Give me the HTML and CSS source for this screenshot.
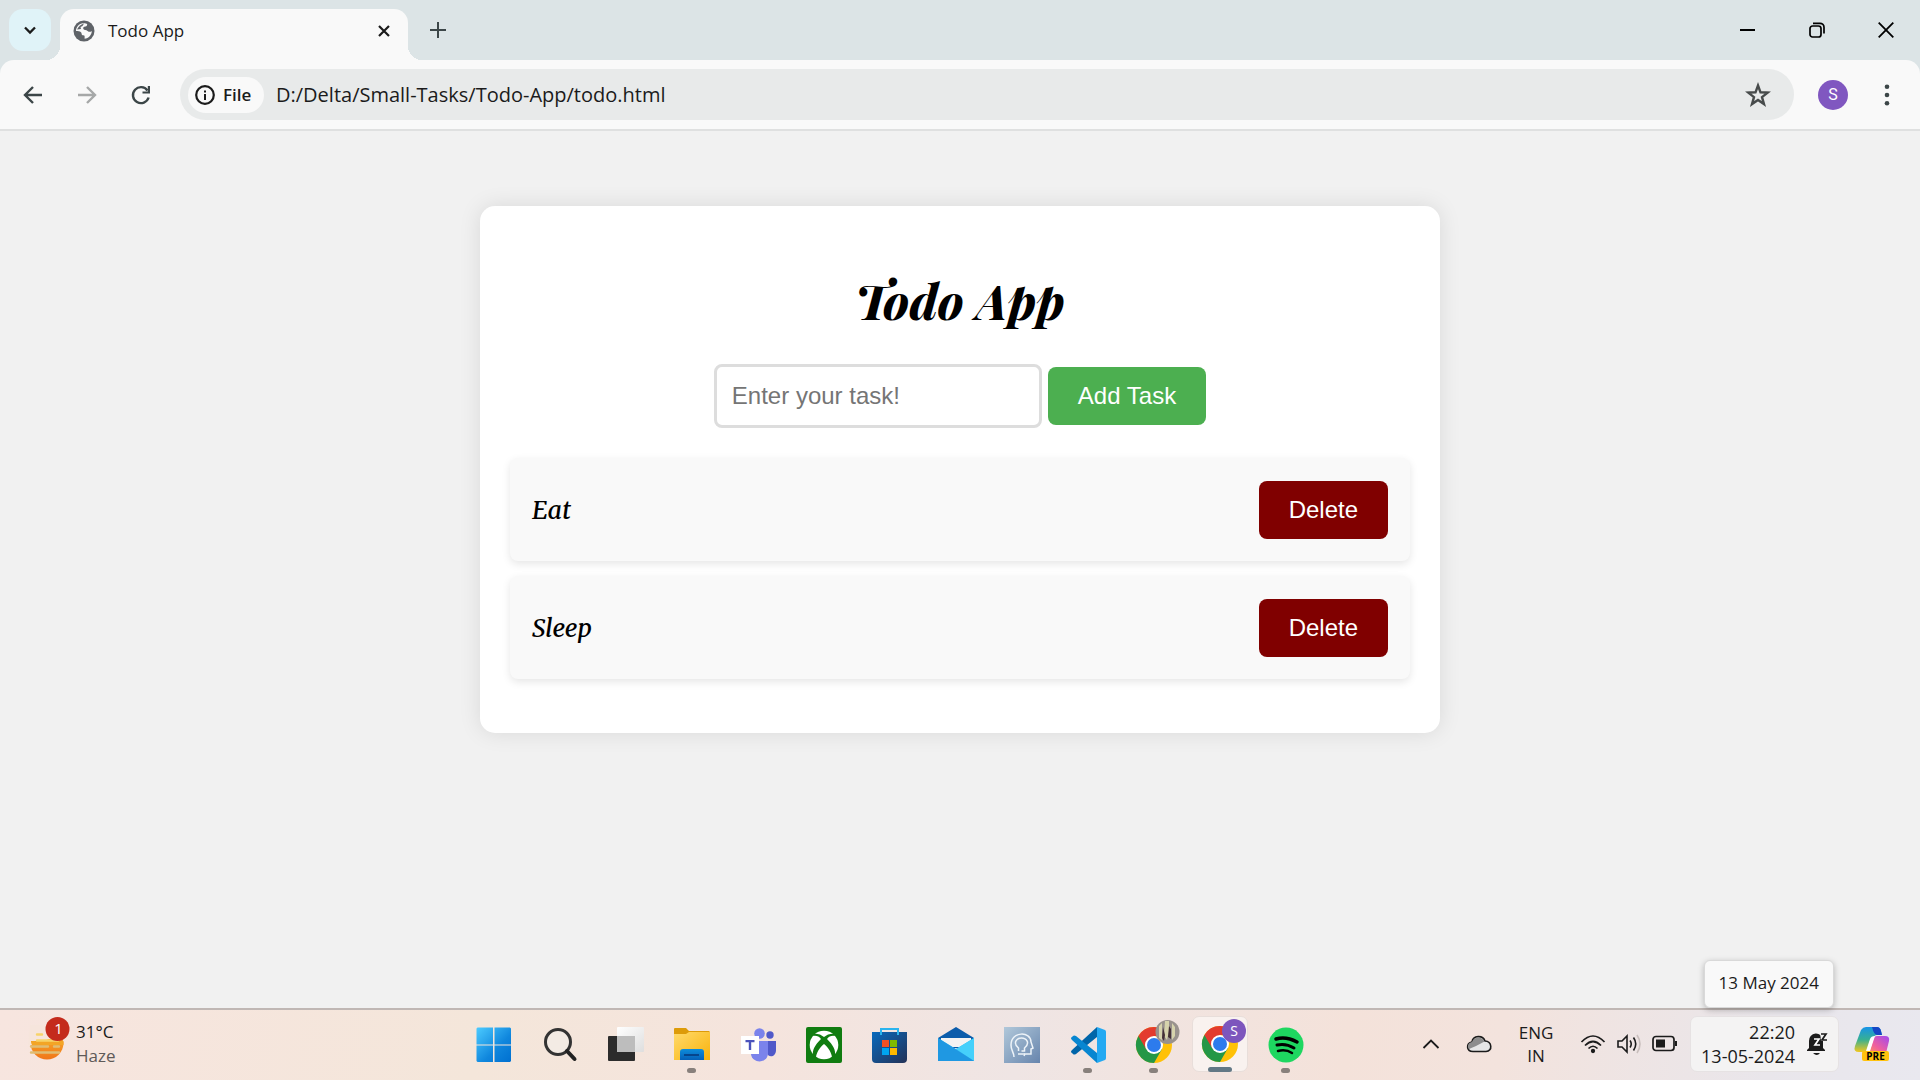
FILE: index.html
```html
<!DOCTYPE html>
<html lang="en">
<head>
<meta charset="utf-8">
<title>Todo App</title>
<link rel="stylesheet" href="styles.css">
</head>
<body>
<header class="browser">
  <div class="tab-strip">
    <button class="tab-search" aria-label="Search tabs"><svg width="14" height="14" viewBox="0 0 14 14"><path d="M2 4.500l5 5 5-5" fill="none" stroke="#1b1b1b" stroke-width="2.300"/></svg></button>
    <div class="tab">
      <svg width="22" height="22" viewBox="0 0 22 22"><circle cx="11" cy="11" r="10.500" fill="#5f6368"/><path d="M10 3.200c-4 .4-7 3.800-7 7.800 2 0 3.800 0 5 1.200 1 1 .2 2.500 1.600 3 1.300.4 2-.2 2 1v2.500c4-.4 7.200-3.700 7.200-7.700-1.600 1.300-3 .9-4.200-.1-1.300-1-3.500-.6-4.200-1.900-.7-1.500.3-2.500 2-2.500 1.500 0 1.600-1.200 1.800-2.400C13 3 11 3.100 10 3.200z" fill="#f9f9f9"/><path d="M4 9.500c1.500-3 3.500-5 7-6L9.500 6l-2 1 .5 2z" fill="#5f6368"/></svg>
      <span class="tab-title">Todo App</span>
      <button class="tab-close" aria-label="Close tab"><svg width="12" height="12" viewBox="0 0 12 12"><path d="M1 1l10 10M11 1L1 11" stroke="#1b1b1b" stroke-width="2.200"/></svg></button>
    </div>
    <button class="new-tab" aria-label="New tab"><svg width="16" height="16" viewBox="0 0 16 16"><path d="M8 0v16M0 8h16" stroke="#3c4648" stroke-width="2"/></svg></button>
    <div class="window-controls">
      <button aria-label="Minimize"><svg width="16" height="16" viewBox="0 0 16 16"><path d="M0 7h15v2H0z"/></svg></button>
      <button aria-label="Restore"><svg width="16" height="16" viewBox="0 0 16 16" fill="none" stroke="#000" stroke-width="1.700"><rect x="1" y="4" width="11" height="11" rx="2.500"/><path d="M4 1.300h7a4 4 0 0 1 4 4v6.200" /></svg></button>
      <button aria-label="Close"><svg width="16" height="16" viewBox="0 0 16 16"><path d="M.7.700l14.600 14.600M15.300.700L.7 15.300" stroke="#000" stroke-width="1.800"/></svg></button>
    </div>
  </div>
  <div class="toolbar">
    <button class="nav" aria-label="Back"><svg width="20" height="20" viewBox="0 0 20 20"><path d="M19 10H2.500M10 2l-8 8 8 8" fill="none" stroke="#3c4648" stroke-width="2.400"/></svg></button>
    <button class="nav" aria-label="Forward"><svg width="20" height="20" viewBox="0 0 20 20"><path d="M1 10h16.500M10 2l8 8-8 8" fill="none" stroke="#a6a8a8" stroke-width="2.400"/></svg></button>
    <button class="nav" aria-label="Reload"><svg width="20" height="20" viewBox="0 0 20 20"><path d="M17.600 12.500A8 8 0 1 1 16.500 5.500" fill="none" stroke="#3c4648" stroke-width="2.400"/><path d="M19 1v7.500h-7.500V6.400h5.300V1z" fill="#3c4648"/></svg></button>
    <div class="address">
      <button class="chip"><svg width="20" height="20" viewBox="0 0 20 20"><circle cx="10" cy="10" r="8.800" fill="none" stroke="#1b1b1b" stroke-width="2.200"/><path d="M9 9h2v6H9zM9 5.500h2v2H9z" fill="#1b1b1b"/></svg>File</button>
      <input class="url" type="text" aria-label="Address" value="D:/Delta/Small-Tasks/Todo-App/todo.html">
      <button class="star" aria-label="Bookmark this page"><svg width="24" height="24" viewBox="0 0 24 24"><path d="M12 2.500l2.500 6.800 7.200.3-5.700 4.500 2 7-6-4.100-6 4.100 2-7L2.300 9.600l7.200-.3z" fill="none" stroke="#474b4b" stroke-width="2.400"/></svg></button>
    </div>
    <button class="avatar" aria-label="Profile">S</button>
    <button class="nav" aria-label="Menu"><svg width="20" height="22" viewBox="0 0 20 22" fill="#3c4648"><circle cx="10" cy="2.800" r="2.300"/><circle cx="10" cy="11" r="2.300"/><circle cx="10" cy="19.200" r="2.300"/></svg></button>
  </div>
</header>

<main class="page">
  <section class="card">
    <h1>Todo App</h1>
    <form class="task-form">
      <input class="task-input" type="text" placeholder="Enter your task!" aria-label="Task">
      <button class="btn add" type="button">Add Task</button>
    </form>
    <ul class="tasks">
      <li><span>Eat</span><button class="btn delete">Delete</button></li>
      <li><span>Sleep</span><button class="btn delete">Delete</button></li>
    </ul>
  </section>
</main>

<footer class="taskbar">
  <button class="weather">
    <svg width="42" height="44" viewBox="0 5 42 44"><defs><linearGradient id="sun" x1="0" y1="0" x2="0" y2="1"><stop offset="0" stop-color="#fbc02d"/><stop offset="1" stop-color="#f0761a"/></linearGradient></defs><circle cx="19" cy="26" r="16.500" fill="url(#sun)"/><path d="M2 8h35v16H12L5 28H0z" fill="#f6e5dc"/><path d="M33 22c2 0 3 3 2.500 6H4c-1-2-1-3-1-4h13l5-2z" fill="#f3a526"/><g stroke-linecap="round" stroke-width="2.400"><path d="M9 17.500h5M9 23.500h21" stroke="#f7d36a"/><path d="M3 29.500h17M26 29.500h5M3 35.500h28" stroke="#dfbd74"/></g><circle cx="29.500" cy="12" r="12" fill="#c42b1c"/><text x="30.500" y="17" text-anchor="middle" font-size="15" fill="#fff">1</text></svg>
    <span><span>31°C</span><span class="muted">Haze</span></span>
  </button>
  <nav class="apps" aria-label="Apps">
    <button aria-label="Start"><svg width="36" height="36" viewBox="0 0 36 36"><defs><linearGradient id="win" x1="0" y1="0" x2="1" y2="1"><stop offset="0" stop-color="#4ccbff"/><stop offset=".6" stop-color="#0f86dd"/><stop offset="1" stop-color="#0070d0"/></linearGradient></defs><path d="M1.500.500H17v17H.500v-16zM18.500.500h15.500l1 1v16H18.500zM.500 18.500H17V35H1.500l-1-1zM18.500 18.500H35V34l-1 1H18.500z" fill="url(#win)"/></svg></button>
    <button aria-label="Search"><svg width="36" height="36" viewBox="0 0 36 36"><circle cx="16" cy="15" r="12.500" fill="#f3ebe4" stroke="#333" stroke-width="3"/><path d="M25 24l7.500 8" stroke="#222" stroke-width="4" stroke-linecap="round"/></svg></button>
    <button aria-label="Task view"><svg width="36" height="36" viewBox="0 0 36 36"><defs><linearGradient id="tv" x1="0" y1="0" x2="1" y2="1"><stop offset="0" stop-color="#fff"/><stop offset="1" stop-color="#dedede"/></linearGradient></defs><rect y="9" width="27" height="25" rx="1" fill="#2c2c2c"/><rect x="9" width="27" height="25" rx="1" fill="url(#tv)"/><path d="M9 9h18v16H9z" fill="#bdbdbd"/></svg></button>
    <button class="running" aria-label="File Explorer"><svg width="36" height="36" viewBox="0 0 36 36"><defs><linearGradient id="fold" x1="0" y1="0" x2="1" y2="1"><stop offset="0" stop-color="#ffda6b"/><stop offset="1" stop-color="#f9b20b"/></linearGradient><linearGradient id="fb" x1="0" y1="0" x2="0" y2="1"><stop offset="0" stop-color="#0d8ddb"/><stop offset="1" stop-color="#0560b8"/></linearGradient></defs><path d="M0 2q0-1 1-1h11l3 3h20l1 1v10H0z" fill="#dd9b09"/><path d="M0 7h12l3-2h21v28H0z" fill="url(#fold)"/><path d="M6 33v-8q0-3 3-3h18q3 0 3 3v8z" fill="url(#fb)"/><path d="M10 28h15" stroke="#06458c" stroke-width="2"/></svg></button>
    <button aria-label="Teams"><svg width="36" height="36" viewBox="0 0 36 36"><circle cx="30" cy="8" r="3.700" fill="#5059c9"/><path d="M28 14h8v9c0 8-9 8-9 2z" fill="#5059c9"/><circle cx="19.500" cy="6.500" r="5.300" fill="#7b83eb"/><path d="M11 14h17v12c0 11-16 11-17 1z" fill="#7b83eb"/><path d="M1 9h18v18H1z" fill="#fff"/><path d="M5.500 13h9v2.300h-3.300V23H8.800v-7.700H5.500z" fill="#4b53bc"/></svg></button>
    <button aria-label="Xbox"><svg width="36" height="36" viewBox="0 0 36 36"><rect width="36" height="36" rx="2" fill="#107c10"/><circle cx="18" cy="18" r="14.300" fill="#fff"/><path d="M8 7q5-1 10 3 5-4 10-3l1 2q-5-1-8 3c6 6 9 11 8 17l-3 2c0-5-4-11-8-14-4 3-8 9-8 14l-3-2c-1-6 2-11 8-17Q12 8 7 9z" fill="#107c10"/></svg></button>
    <button aria-label="Store"><svg width="36" height="36" viewBox="0 0 36 36"><defs><linearGradient id="st" x1="0" y1="0" x2="1" y2="1"><stop offset="0" stop-color="#0869bd"/><stop offset="1" stop-color="#243257"/></linearGradient></defs><path d="M0 5h35v27q0 4-4 4H4q-4 0-4-4z" fill="url(#st)"/><path d="M9 8V2h17v6" fill="none" stroke="#2bb4ee" stroke-width="2"/><path d="M10 13h7v7h-7z" fill="#f25022"/><path d="M18 13h7v7h-7z" fill="#7fba00"/><path d="M10 21h7v7h-7z" fill="#00a4ef"/><path d="M18 21h7v7h-7z" fill="#ffb900"/></svg></button>
    <button aria-label="Mail"><svg width="36" height="36" viewBox="0 0 36 36"><path d="M0 11L18 0l18 11v10H0z" fill="#0b5cab"/><path d="M3 11h30v9H3z" fill="#f3f3f3"/><path d="M0 11l18 11L36 11v23H0z" fill="#30b6f0"/><path d="M18 22l18-11v23z" fill="#45d0fb"/><path d="M0 34V11l36 23z" fill="#1f98e2"/></svg></button>
    <button aria-label="Assistant"><svg width="36" height="36" viewBox="0 0 36 36"><defs><linearGradient id="hd" x1="0" y1="0" x2="1" y2="1"><stop offset="0" stop-color="#b1c8da"/><stop offset="1" stop-color="#6785ad"/></linearGradient></defs><path d="M0 0h36v36H0z" fill="url(#hd)"/><g fill="none" stroke="#edf3f8" stroke-width="1.500"><path d="M10 30c0-5-3-6-3-12C7 4 27 4 27 15l2 6-2 1v5h-6l-1 2"/><path d="M14.500 24v-3c-6-5-2-10 3-10s9 5 3 10v3h-3M14 27h7"/></g></svg></button>
    <button class="running" aria-label="Visual Studio Code"><svg width="36" height="36" viewBox="0 0 36 36"><path d="M27 0L2 23q-2 2 0 3l1 1q1 1 3 0L27 10z" fill="#0065a9"/><path d="M27 36L2 13q-2-2 0-3l1-1q1-1 3 0l21 17z" fill="#0786d1"/><path d="M27 0l8 3q1 .5 1 2v26q0 1.500-1 2l-8 3z" fill="#24a9f2"/></svg></button>
    <button class="running" aria-label="Chrome"><svg width="46" height="46" viewBox="0 0 46 46"><use href="#chrome"/><circle cx="36.500" cy="10" r="12" fill="#99928d"/><path d="M28 4l3-3v17l-3-2zM34-1h4v10l-2 9-3-4zM41 1l3 4v9l-3 4z" fill="#d6d3ac"/><path d="M32 5l2 8-1 6-2-3zM38 4l2 3v10l-3-2z" fill="#443036"/></svg></button>
    <button class="running active" aria-label="Chrome, Todo App"><svg width="46" height="46" viewBox="0 0 46 46"><g id="chrome"><circle cx="23" cy="23" r="18" fill="#ffc107"/><path d="M23 23L7.400 14A18 18 0 0 0 23 41l8-14z" fill="#249747"/><path d="M7.400 14a18 18 0 0 1 31.200 0H23l-8 13z" fill="#e33b2e"/><circle cx="23" cy="23" r="9" fill="#fff"/><circle cx="23" cy="23" r="7" fill="#2d7bed"/></g><circle cx="37" cy="10" r="12" fill="#7d56bd"/><text x="37" y="15" text-anchor="middle" font-size="14" fill="#fff">S</text></svg></button>
    <button class="running" aria-label="Spotify"><svg width="36" height="36" viewBox="0 0 36 36"><circle cx="18" cy="18" r="17.500" fill="#1ed760"/><g fill="none" stroke="#000" stroke-linecap="round"><path d="M8 12q10-3 21 3" stroke-width="3.500"/><path d="M9 18q9-2 17 3" stroke-width="3"/><path d="M10 24q8-2 14 2" stroke-width="2.500"/></g></svg></button>
  </nav>
  <div class="tray">
    <button class="tray-icon" aria-label="Show hidden icons"><svg width="18" height="12" viewBox="0 0 18 12"><path d="M1.500 10L9 2.500l7.500 7.500" fill="none" stroke="#1b1b1b" stroke-width="1.800"/></svg></button>
    <button class="tray-icon" aria-label="OneDrive"><svg width="26" height="18" viewBox="0 0 26 18"><path d="M7 16.500C0 16.500 0 8 6 7c1-7 11-7 13-1 7 0 8 10.500 1 10.500z" fill="#e6e6e6" stroke="#1b1b1b" stroke-width="1.600"/><path d="M6 7c2-6 10-6 12.500-.5L10 11 3 14C1 11 2 8 6 7z" fill="#8d8d8d"/></svg></button>
    <button class="language"><span>ENG</span><span>IN</span></button>
    <button class="status" aria-label="Network, volume and battery">
      <svg width="26" height="20" viewBox="0 0 26 20" fill="none" stroke="#1b1b1b" stroke-width="1.700"><path d="M1.500 8q11.500-12 23 0M5 11.500q8-8 16 0M8.500 14.500q4.500-4.500 9 0"/><circle cx="13" cy="17" r="1.300" fill="#1b1b1b"/></svg>
      <svg width="26" height="20" viewBox="0 0 26 20" fill="none" stroke="#1b1b1b" stroke-width="1.600"><path d="M2 7h4l5-5v16l-5-5H2zM14 6.500q2.500 3.500 0 7M17.500 3.500q4.500 6.500 0 13"/><path d="M21 1q6 9 0 18" stroke="#c9bfbd"/></svg>
      <svg width="26" height="18" viewBox="0 0 26 18"><rect x="1" y="1.500" width="21" height="14" rx="3" fill="none" stroke="#1b1b1b" stroke-width="1.700"/><path d="M4 4.500h9v8H4zM23 6h2v5h-2z" fill="#1b1b1b"/></svg>
    </button>
    <div class="clock-wrap">
      <div class="tooltip" role="tooltip">13 May 2024</div>
      <button class="clock"><span class="time"><span>22:20</span><span>13-05-2024</span></span>
        <svg width="22" height="24" viewBox="0 0 22 24"><path d="M3 16V9a7 7 0 0 1 14-1v8l2 2v1H1v-1zM7 21h7q-3 4-7 0z" fill="#1b1b1b"/><path d="M8 7h5l-4 6h5" fill="none" stroke="#fff" stroke-width="1.700"/><path d="M14 0h8v9h-7z" fill="#f4f3f3"/><path d="M15 2h5l-4 6h5" fill="none" stroke="#1b1b1b" stroke-width="1.700"/></svg></button>
    </div>
    <button class="copilot" aria-label="Copilot"><svg width="36" height="36" viewBox="0 0 36 36"><defs><linearGradient id="c1" x1="0" y1="0" x2="0" y2="1"><stop offset="0" stop-color="#1793e8"/><stop offset=".5" stop-color="#37b093"/><stop offset="1" stop-color="#f2c71d"/></linearGradient><linearGradient id="c2" x1="1" y1="0" x2="0" y2="1"><stop offset="0" stop-color="#a04af0"/><stop offset=".6" stop-color="#f0609d"/><stop offset="1" stop-color="#ff9a55"/></linearGradient></defs><path d="M7 4q2-3 5-3h11q3 0 4 4l1 4h-5q-3 0-4 4l-3 10q-1 3-4 3H5q-6 0-4-6z" fill="url(#c1)"/><path d="M18 1h5q3 0 4 4l1 4h-5q-3 0-5-8z" fill="#1546c5"/><path d="M19 14q1-4 4-4h8q5 0 4 5l-3 12H13q2 0 3-3z" fill="url(#c2)"/><path d="M16 13q1-3 5-3l-5 15h-4z" fill="#fff"/><rect x="8" y="25" width="27" height="10" rx="2" fill="#ffc20e"/><text x="21.500" y="34" text-anchor="middle" font-size="10" font-weight="700">PRE</text></svg></button>
  </div>
</footer>
</body>
</html>
```
FILE: styles.css
```css
* { box-sizing: border-box; }
body {
  margin: 0;
  min-height: 100vh;
  display: flex;
  flex-direction: column;
  background: #f1f1f1;
  color: #1b1b1b;
  font-family: "Open Sans", "Noto Sans", sans-serif;
}
button { border: 0; padding: 0; background: none; font: inherit; color: inherit; display: flex; align-items: center; justify-content: center; }
svg { display: block; flex: none; overflow: visible; }

/* Browser frame */
.browser { background: #dce4e6; }
.tab-strip { display: flex; height: 60px; padding-left: 9px; }
.tab-search { width: 42px; height: 42px; margin: 9px 9px 0 0; border-radius: 14px; background: #e0f3f8; }
.tab { position: relative; display: flex; align-items: center; width: 348px; height: 51px; margin-top: 9px; padding: 0 12px 8px 13px; border-radius: 14px 14px 0 0; background: #f9f9f9; }
.tab::before, .tab::after { content: ""; position: absolute; bottom: 0; width: 14px; height: 14px; }
.tab::before { right: 100%; background: radial-gradient(circle at 0 0, transparent 14px, #f9f9f9 14px); }
.tab::after { left: 100%; background: radial-gradient(circle at 100% 0, transparent 14px, #f9f9f9 14px); }
.tab-title { flex: 1; margin-left: 13px; font-size: 17px; line-height: 24px; }
.tab-close { width: 24px; height: 24px; }
.new-tab { width: 42px; height: 42px; margin: 9px 0 0 9px; }
.window-controls { display: flex; margin-left: auto; }
.window-controls button { width: 69px; height: 59px; }
.toolbar { display: flex; align-items: center; height: 71px; padding: 0 6px; border-bottom: 2px solid #dfe0e0; border-radius: 14px 14px 0 0; background: #f9f9f9; }
.nav { width: 54px; height: 54px; }
.address { display: flex; flex: 1; align-items: center; height: 51px; margin: 0 24px 0 12px; padding: 0 24px 0 8px; border-radius: 26px; background: #e8eaea; }
.chip { gap: 8px; justify-content: flex-start; width: 76px; height: 36px; padding-left: 7px; border-radius: 18px; background: #f9f9f9; font-size: 17px; font-weight: 600; }
.url { flex: 1; margin: 0 12px; padding: 0; border: 0; background: none; color: #1b1b1b; font: 20px/28px "Open Sans", "Noto Sans", sans-serif; }
.avatar { width: 30px; height: 30px; margin-right: 12px; border-radius: 50%; background: #8057c0; color: #fff; font: 16px/20px Roboto, sans-serif; }

/* Todo page */
.page { flex: 1; padding: 75px 0; }
.card { width: 50%; margin: 0 auto; padding: 30px; border-radius: 15px; background: #fff; box-shadow: 0 0 22px rgba(0, 0, 0, .1); }
h1 { margin: 32px 0; text-align: center; color: #000; font: italic 800 48px/64px "Playfair Display", "Liberation Serif", serif; }
.task-form { display: flex; align-items: center; justify-content: center; gap: 6px; margin-bottom: 30px; }
.task-input { width: 328px; height: 64px; padding: 0 15px; border: 3px solid #ddd; border-radius: 8px; background: #fff; font: 24px/28px "Liberation Sans", Arial, sans-serif; }
.task-input::placeholder { color: #757575; }
.btn { padding: 15px 30px; border-radius: 8px; color: #fff; font: 24px/28px "Liberation Sans", Arial, sans-serif; }
.add { background: #4caf50; }
.delete { background: maroon; }
.tasks { display: grid; gap: 15px; margin: 0 0 24px; padding: 0; list-style: none; }
.tasks li { display: flex; align-items: center; justify-content: space-between; height: 103px; padding: 0 22px; border-radius: 8px; background: #f9f9f9; box-shadow: 0 3px 8px rgba(0, 0, 0, .1); color: #000; font: italic 500 25px/30px Merriweather, "DejaVu Serif Condensed", "DejaVu Serif", serif; }

/* Taskbar */
.taskbar { display: flex; height: 72px; border-top: 2px solid #c0b7b4; background: linear-gradient(100deg, #f7e5df, #f4e6da 25%, #f5e4dd 40%, #efe5e4 53%, #f4e2da 70%, #f3e3dd 78%, #e9e6eb 92%, #e9e8ef); font-size: 17px; line-height: 24px; }
.weather { flex: 0 0 24%; justify-content: flex-start; gap: 6px; padding: 0 0 2px 28px; text-align: left; }
.weather > span, .language, .time { display: flex; flex-direction: column; }
.muted { color: #5f5a58; }
.apps { display: flex; }
.apps button { position: relative; width: 66px; height: 70px; }
.running::after { content: ""; position: absolute; bottom: 7px; width: 9px; height: 5px; border-radius: 3px; background: #88807c; }
.apps .active { width: 56px; height: 56px; margin: 6px 5px; border: 1px solid #e8deda; border-radius: 7px; background: #f9f2ef; }
.active::after { bottom: -1px; width: 24px; background: #627885; }
.tray { display: flex; align-items: center; margin-left: auto; padding: 0 30px 2px 0; }
.tray-icon { width: 48px; height: 56px; }
.language { width: 66px; line-height: 23px; }
.status { gap: 10px; margin-left: 11px; }
.clock-wrap { position: relative; margin-left: 12px; }
.clock { width: 149px; height: 56px; gap: 11px; justify-content: flex-end; padding-right: 10px; border: 1px solid #e6e2e3; border-radius: 7px; background: #f4f3f3; }
.time { align-items: flex-end; font-size: 18px; }
.tooltip { position: absolute; right: 5px; bottom: calc(100% + 8px); padding: 10px 14px 12px; border: 1px solid #d9d9d9; border-radius: 6px; background: #f9f9f9; box-shadow: 0 2px 6px rgba(0, 0, 0, .25); line-height: 24px; white-space: nowrap; }
.copilot { margin-left: 15px; }
```
